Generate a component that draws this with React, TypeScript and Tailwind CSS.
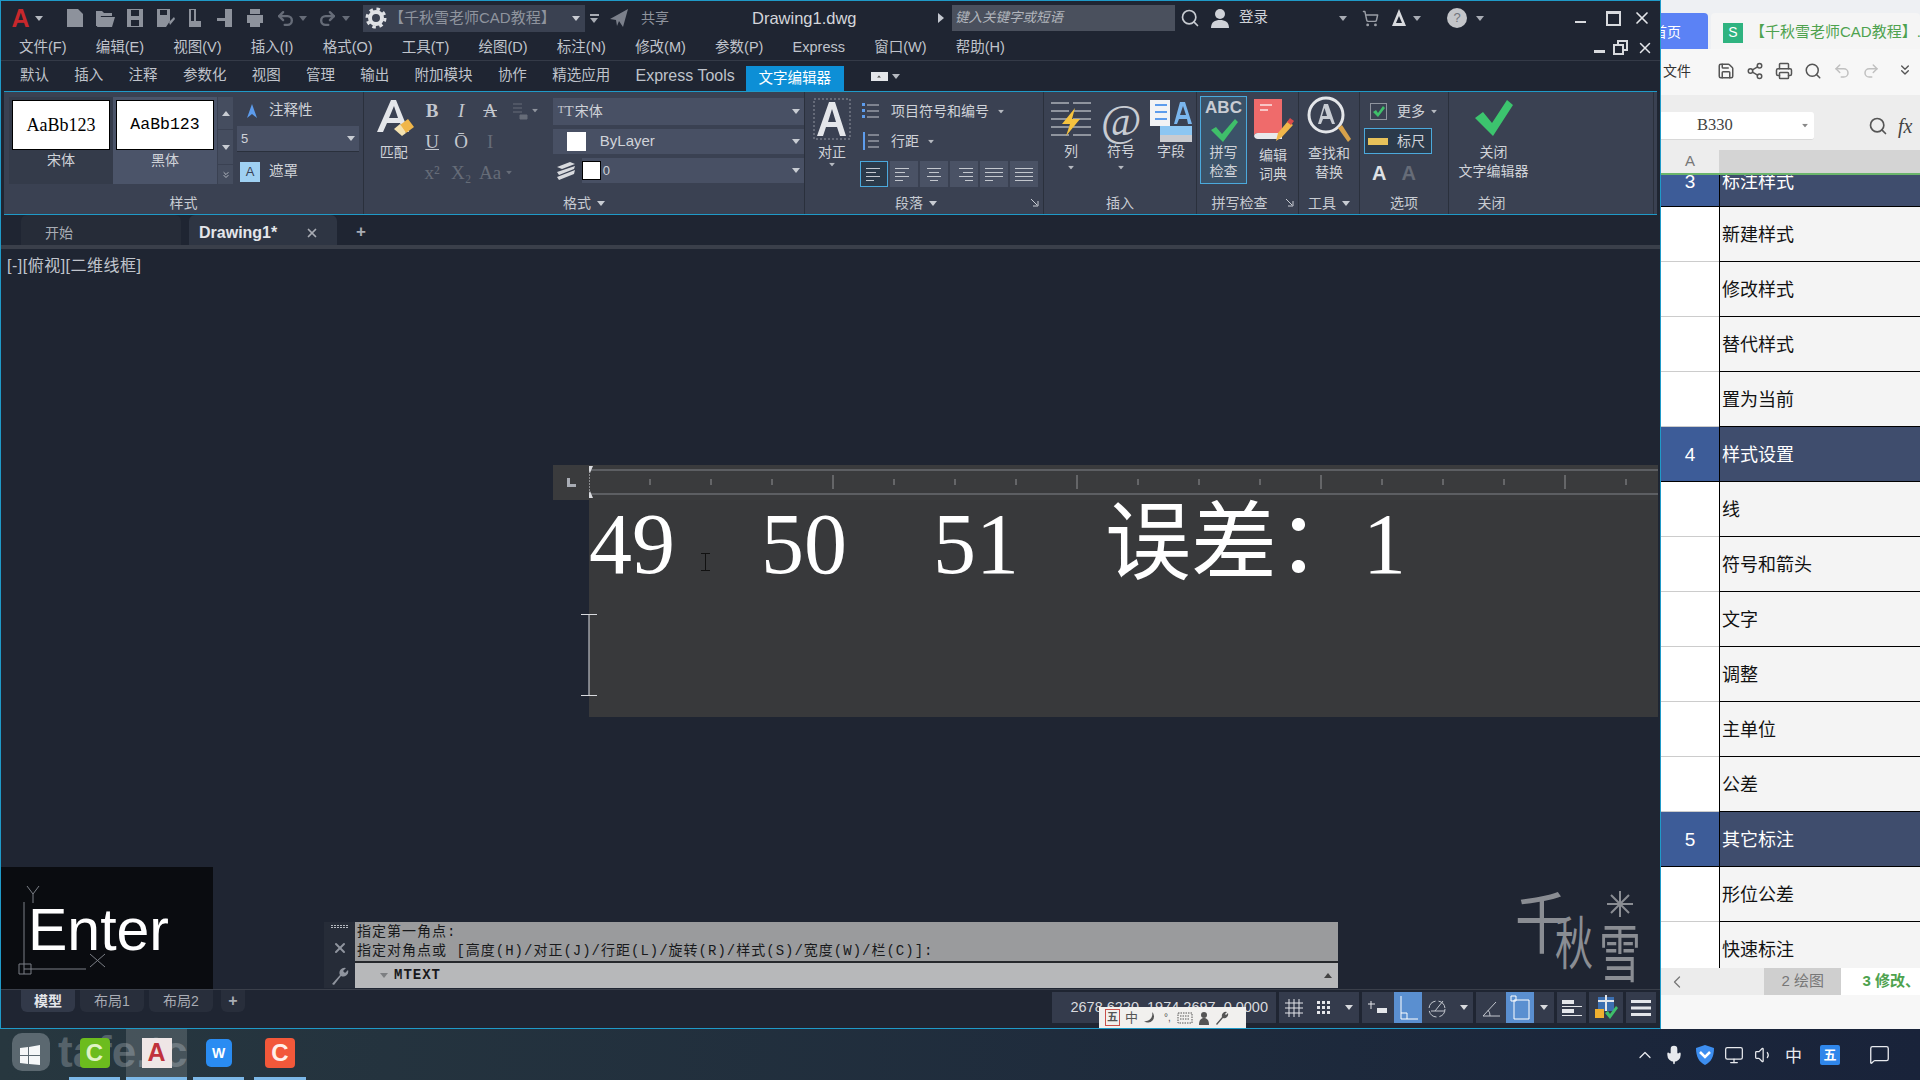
import React from 'react';
import { ChevronLeft, ChevronUp, Mic, Monitor, MessageSquare, Printer, Redo2, Save, Search, Share2, ShoppingCart, Undo2, Volume1, X, ChevronsDown } from 'lucide-react';

const Caret = ({ className = '' }: { className?: string }) => (
  <svg width="8" height="5" viewBox="0 0 8 5" className={className}>
    <path d="M0 0h8L4 5z" fill="currentColor" />
  </svg>
);

const FileIcon = ({ kind }: { kind: number }) => (
  <svg width="22" height="22" viewBox="0 0 22 22" fill="#8d929c">
    {kind === 0 && <path d="M3 2h11l5 5v13H3z" />}
    {kind === 1 && <path d="M2 19V4h6l2 2h8v3H7l-3 10zM6 10h15l-3 10H3z" />}
    {kind === 2 && <path d="M3 2h16v18H3zM7 3v6h8V3zM7 13v6h8v-6z" fillRule="evenodd" />}
    {kind === 3 && <path d="M3 2h13v12l-4 6H3zM6 3v5h7V3zM15 15l5-5 1 2-5 6z" fillRule="evenodd" />}
    {kind === 4 && <path d="M5 2h7v12h5v6H5zM7 3v11h3V3z" fillRule="evenodd" />}
    {kind === 5 && <path d="M11 2h7v18h-7v-6H3v-3h8z" />}
    {kind === 6 && <path d="M6 2h10v5H6zM3 8h16v8h-3v4H6v-4H3z" />}
  </svg>
);

const TitleBar = () => (
  <div className="flex h-[34px] shrink-0 items-center text-[#c4c8d0]">
    <div className="ml-[9px] flex w-[21px] justify-center">
      <span className="text-[25px] leading-none font-bold text-[#c8282c]">A</span>
    </div>
    <Caret className="ml-[4px] text-[#b5b9c0]" />
    <div className="ml-[17px] flex">
      {[0, 1, 2, 3, 4, 5, 6].map((k) => (
        <div key={k} className="flex w-[30px] justify-center">
          <FileIcon kind={k} />
        </div>
      ))}
    </div>
    <Undo2 size={19} strokeWidth={3} className="ml-[6px] text-[#666c78]" />
    <Caret className="ml-[4px] text-[#666c78]" />
    <Redo2 size={19} strokeWidth={3} className="ml-[11px] text-[#666c78]" />
    <Caret className="ml-[5px] text-[#666c78]" />
    <div className="ml-[13px] flex h-[27px] w-[222px] items-center bg-[#3a4151]">
      <svg width="22" height="22" viewBox="0 0 22 22" className="ml-[2px]">
        <circle cx="11" cy="11" r="6" fill="none" stroke="#dfe1e5" strokeWidth="4" />
        <circle cx="11" cy="11" r="9" fill="none" stroke="#dfe1e5" strokeWidth="3" strokeDasharray="3.5 3.6" />
      </svg>
      <span className="ml-[2px] text-[15px] text-[#8f949e]">【千秋雪老师CAD教程】</span>
      <Caret className="ml-auto mr-[5px] text-[#c9ccd3]" />
    </div>
    <div className="ml-[5px] flex flex-col gap-[2px]">
      <div className="h-[2px] w-[9px] bg-[#a8acb4]" />
      <Caret className="text-[#a8acb4]" />
    </div>
    <svg width="20" height="20" viewBox="0 0 20 20" className="ml-[10px]">
      <path d="M1 11 19 1l-5 18-4-6-2 5-1-6z" fill="#7b808b" />
    </svg>
    <span className="ml-[12px] text-[14px] text-[#8f949e]">共享</span>
    <span className="ml-[83px] w-[186px] text-[16.5px] text-[#d4d6db]">Drawing1.dwg</span>
    <svg width="6" height="10" viewBox="0 0 6 10" className="text-[#c4c8d0]">
      <path d="M0 0l6 5-6 5z" fill="currentColor" />
    </svg>
    <div className="ml-[8px] flex h-[26px] w-[223px] items-center bg-[#4a505d] pl-[3px] text-[13.5px] italic text-[#b0b4bb]">
      键入关键字或短语
    </div>
    <Search size={20} className="ml-[5px] text-[#c8ccd2]" />
    <svg width="22" height="22" viewBox="0 0 22 22" className="ml-[9px]">
      <circle cx="11" cy="7" r="5" fill="#cfd2d8" />
      <path d="M2 21c0-6 4-8 9-8s9 2 9 8z" fill="#cfd2d8" />
    </svg>
    <span className="ml-[8px] text-[14.5px] text-[#cfd2d8]">登录</span>
    <Caret className="ml-[71px] text-[#a8acb4]" />
    <ShoppingCart size={17} className="ml-[15px] text-[#9a9ea6]" />
    <svg width="22" height="22" viewBox="0 0 22 22" className="ml-[9px]">
      <path d="M11 2 4 19h14zM11 9 8 16h6z" fill="#d8dade" fillRule="evenodd" />
    </svg>
    <Caret className="ml-[3px] text-[#a8acb4]" />
    <div className="ml-[26px] flex h-[20px] w-[20px] items-center justify-center rounded-full bg-[#c3c5c9] text-[13px] text-[#70747c]">
      ?
    </div>
    <Caret className="ml-[9px] text-[#a8acb4]" />
    <div className="ml-[91px] mt-[8px] h-[2px] w-[11px] self-center bg-[#d8dade]" />
    <div className="ml-[20px] h-[15px] w-[15px] border-[2px] border-t-[3px] border-[#d8dade]" />
    <X size={20} className="ml-[11px] text-[#e4e6ea]" />
  </div>
);

const menus = ['文件(F)', '编辑(E)', '视图(V)', '插入(I)', '格式(O)', '工具(T)', '绘图(D)', '标注(N)', '修改(M)', '参数(P)', 'Express', '窗口(W)', '帮助(H)'];

const MenuBar = () => (
  <div className="flex h-[26px] shrink-0 items-center border-b border-[#343a47] pl-[18px] text-[14.5px] text-[#c0c4cc]">
    <div className="flex gap-[29.2px]">
      {menus.map((m) => (
        <span key={m}>{m}</span>
      ))}
    </div>
    <div className="ml-auto mr-[6px] flex items-center gap-[8px]">
      <div className="mt-[8px] h-[3px] w-[11px] bg-[#d8dade]" />
      <svg width="15" height="15" viewBox="0 0 15 15" fill="none" stroke="#d8dade" strokeWidth="2">
        <path d="M5 4V1h9v9h-3M1 5h9v9H1z" />
      </svg>
      <X size={18} className="text-[#e4e6ea]" />
    </div>
  </div>
);

const tabs = ['默认', '插入', '注释', '参数化', '视图', '管理', '输出', '附加模块', '协作', '精选应用'];

const TabBar = () => (
  <div className="flex h-[30px] shrink-0 items-center pl-[19px] text-[14.5px] text-[#bfc3cb]">
    <div className="flex items-center gap-[25.3px]">
      {tabs.map((t) => (
        <span key={t}>{t}</span>
      ))}
      <span className="text-[16px]">Express Tools</span>
    </div>
    <div className="ml-[11px] flex h-[25px] w-[98px] items-center justify-center self-end bg-[#0d8fd6] text-white">文字编辑器</div>
    <div className="ml-[27px] flex h-[9px] w-[17px] items-center justify-center bg-[#e4e6ea]">
      <Caret className="scale-50 rotate-180 text-[#555]" />
    </div>
    <Caret className="ml-[4px] text-[#b5b9c0]" />
  </div>
);

const Panel = ({ w, label, mark, launcher, labelClass = '', children }: { w: string; label: string; mark?: boolean; launcher?: boolean; labelClass?: string; children: React.ReactNode }) => (
  <div className={`${w} flex shrink-0 flex-col border-r border-[#2a303c]`}>
    <div className="relative flex h-[100px] shrink-0">{children}</div>
    <div className={`relative flex h-[22px] items-center justify-center gap-[6px] text-[14px] text-[#c8ccd3] ${labelClass}`}>
      <span>{label}</span>
      {mark && <Caret className="text-[#c8ccd3]" />}
      {launcher && (
        <svg width="8" height="8" viewBox="0 0 8 8" className="absolute right-[4px] top-[7px]">
          <path d="M0 0l6 6M2 7h5V2" fill="none" stroke="#c8ccd3" />
        </svg>
      )}
    </div>
  </div>
);

const BigLabel = ({ children }: { children: React.ReactNode }) => (
  <div className="text-center text-[14px] leading-[19px] text-[#d0d3d9]">{children}</div>
);

const StyleCard = ({ name, active, mono }: { name: string; active?: boolean; mono?: boolean }) => (
  <div className={`flex h-full w-[104px] flex-col items-center pt-[3px] ${active ? 'bg-[#4b5469]' : 'bg-[#343b4a]'}`}>
    <div className={`flex h-[50px] w-[98px] items-center justify-center border border-black bg-white text-black ${mono ? "font-['Liberation_Mono',monospace] text-[16.5px]" : "font-['Liberation_Serif',serif] text-[18px]"}`}>
      AaBb123
    </div>
    <span className="text-[14px] leading-[20px] text-[#d0d3d9]">{name}</span>
  </div>
);

const StylePanel = () => (
  <Panel w="w-[360px]" label="样式">
    <div className="mb-[8px] ml-[5px] mt-[5px] flex">
      <StyleCard name="宋体" />
      <StyleCard name="黑体" active mono />
      <div className="ml-[1px] flex w-[15px] flex-col gap-[1px] text-[#c8ccd3]">
        <div className="flex h-[32px] items-center justify-center bg-[#454d5f]">
          <Caret className="rotate-180" />
        </div>
        <div className="flex h-[34px] items-center justify-center bg-[#454d5f]">
          <Caret />
        </div>
        <div className="flex flex-1 items-center justify-center bg-[#454d5f]">
          <ChevronsDown size={10} />
        </div>
      </div>
    </div>
    <div className="ml-[4px] flex w-[122px] flex-col text-[14.5px] text-[#d0d3d9]">
      <div className="mt-[6px] flex h-[26px] items-center pl-[7px]">
        <svg width="16" height="16" viewBox="0 0 16 16">
          <path d="M8 1 3 15l5-4 5 4z" fill="#5d9cec" />
        </svg>
        <span className="ml-[9px]">注释性</span>
      </div>
      <div className="mt-[2px] flex h-[26px] items-center justify-between border-b border-[#2a303c] bg-[#485064] px-[4px] text-[13px]">
        5
        <Caret className="text-[#c8ccd3]" />
      </div>
      <div className="mt-[8px] flex h-[24px] items-center pl-[3px]">
        <div className="flex h-[20px] w-[20px] items-center justify-center bg-[#9fd0f2] text-[13px] text-[#394255]">A</div>
        <span className="ml-[9px]">遮罩</span>
      </div>
    </div>
  </Panel>
);

const Fmt = ({ c, cls = '' }: { c: string; cls?: string }) => (
  <span className={`flex w-[29px] justify-center font-['Liberation_Serif',serif] text-[19px] leading-none ${cls}`}>{c}</span>
);

const FormatPanel = () => (
  <Panel w="w-[441px]" label="格式" mark>
    <div className="ml-[5px] flex w-[50px] flex-col items-center pt-[7px]">
      <svg width="44" height="44" viewBox="0 0 44 44">
        <path d="M19 1h5l13 32h-6l-3-9H15l-4 9H5zM17 19h9l-4-12z" fill="#e4e6ea" fillRule="evenodd" />
        <path d="m28 26 8-6 6 8-8 6z" fill="#f0b64a" />
        <path d="m22 30 6-5 6 9-4 3z" fill="#f4e2b0" />
      </svg>
      <span className="mt-[-1px] text-[14px] leading-[20px] text-[#d0d3d9]">匹配</span>
    </div>
    <div className="-ml-[1px] flex w-[126px] flex-col pt-[3px] text-[#c3c7ce]">
      <div className="flex h-[31px] items-center">
        <Fmt c="B" cls="font-bold" />
        <Fmt c="I" cls="italic" />
        <Fmt c="A" cls="line-through" />
        <svg width="16" height="20" viewBox="0 0 16 20" className="ml-[7px] text-[#666c78]">
          <path d="M1 3h9M1 7h9M1 11h9M8 14h7v4H8z" stroke="currentColor" fill="currentColor" />
        </svg>
        <Caret className="ml-[3px] scale-75 text-[#8f949e]" />
      </div>
      <div className="flex h-[31px] items-center">
        <Fmt c="U" cls="underline" />
        <Fmt c="Ō" />
        <Fmt c="I" cls="text-[#666c78]" />
      </div>
      <div className="flex h-[31px] items-center text-[#666c78]">
        <Fmt c="x²" cls="text-[14px]" />
        <Fmt c="X₂" cls="text-[14px]" />
        <Fmt c="Aa" cls="text-[14px]" />
        <Caret className="scale-75" />
      </div>
    </div>
    <div className="ml-[10px] flex w-[253px] flex-col gap-[4px] pt-[6px] text-[14px] text-[#d0d3d9]">
      <div className="flex h-[27px] items-center bg-[#485064] pl-[5px]">
        <span className="mb-[4px] font-['Liberation_Serif',serif] text-[11px] text-[#c3c7ce]">T</span>
        <span className="mr-[1px] font-['Liberation_Serif',serif] text-[15px] text-[#c3c7ce]">T</span>
        <span>宋体</span>
        <Caret className="ml-auto mr-[4px] text-[#c8ccd3]" />
      </div>
      <div className="flex h-[25px] items-center bg-[#485064] pl-[14px]">
        <div className="h-[19px] w-[19px] bg-white" />
        <span className="ml-[14px] font-['Liberation_Sans',sans-serif] text-[15px]">ByLayer</span>
        <Caret className="ml-auto mr-[4px] text-[#c8ccd3]" />
      </div>
      <div className="flex h-[25px] items-center">
        <svg width="22" height="20" viewBox="0 0 22 20" className="ml-[2px]">
          <path d="M2 6 15 1l5 2-13 5zM2 11 20 5l-1 3L4 14zM2 16 20 9l-1 4L4 19z" fill="#d8dade" />
        </svg>
        <div className="ml-[5px] flex h-[25px] flex-1 items-center bg-[#485064]">
          <div className="h-[19px] w-[19px] border border-black bg-white" />
          <span className="ml-[2px] text-[13px]">0</span>
          <Caret className="ml-auto mr-[4px] text-[#c8ccd3]" />
        </div>
      </div>
    </div>
  </Panel>
);

const AlignBtn = ({ active, rows }: { active?: boolean; rows: string[] }) => (
  <div className={`flex h-[26px] w-[28px] flex-col justify-center gap-[3px] px-[5px] ${active ? 'border border-[#4ba9dc] bg-[#2b3a4a]' : 'bg-[#4a5265]'}`}>
    {rows.map((r, i) => (
      <div key={i} className={`h-[1px] bg-[#c3c7ce] ${r}`} />
    ))}
  </div>
);

const ParagraphPanel = () => (
  <Panel w="w-[239px]" label="段落" mark launcher labelClass="pr-[16px]">
    <div className="ml-[8px] flex w-[38px] flex-col items-center pt-[6px]">
      <svg width="38" height="44" viewBox="0 0 38 44">
        <path d="M1 1h36v40H1z" fill="none" stroke="#8f949e" strokeDasharray="2 2" />
        <path d="M16 4h6l11 34h-6l-3-9H13l-3 9H4zM15 24h8l-4-13z" fill="#e4e6ea" fillRule="evenodd" />
      </svg>
      <span className="text-[14px] leading-[20px] text-[#d0d3d9]">对正</span>
      <Caret className="scale-75 text-[#b5b9c0]" />
    </div>
    <div className="ml-[9px] flex flex-col pt-[4px] text-[14px] text-[#d0d3d9]">
      <div className="flex h-[30px] items-center">
        <svg width="20" height="20" viewBox="0 0 20 20" stroke="#c3c7ce">
          <path d="M7 4h12M7 10h12M7 16h12" />
          <path d="M2 2h3v3H2zM2 8h3v3H2zM2 14h3v3H2z" fill="#5d9cec" stroke="none" />
        </svg>
        <span className="ml-[11px]">项目符号和编号</span>
        <Caret className="ml-[8px] scale-75 text-[#b5b9c0]" />
      </div>
      <div className="flex h-[30px] items-center">
        <svg width="20" height="20" viewBox="0 0 20 20" stroke="#c3c7ce">
          <path d="M8 4h11M8 10h11M8 16h11" />
          <path d="M4 1v18" stroke="#5d9cec" strokeWidth="2" />
        </svg>
        <span className="ml-[11px]">行距</span>
        <Caret className="ml-[8px] scale-75 text-[#b5b9c0]" />
      </div>
      <div className="mt-[5px] flex gap-[2px]">
        <AlignBtn active rows={['w-[14px]', 'w-[10px]', 'w-[14px]', 'w-[8px]']} />
        <AlignBtn rows={['w-[14px]', 'w-[10px]', 'w-[14px]', 'w-[8px]']} />
        <AlignBtn rows={['w-[14px] mx-auto', 'w-[10px] mx-auto', 'w-[14px] mx-auto', 'w-[8px] mx-auto']} />
        <AlignBtn rows={['w-[14px] ml-auto', 'w-[10px] ml-auto', 'w-[14px] ml-auto', 'w-[8px] ml-auto']} />
        <AlignBtn rows={['w-full', 'w-full', 'w-full', 'w-[8px]']} />
        <AlignBtn rows={['w-full bg-[#5d9cec]', 'w-full', 'w-full', 'w-full']} />
      </div>
    </div>
  </Panel>
);

const InsertPanel = () => (
  <Panel w="w-[153px]" label="插入">
    <div className="ml-[2px] flex w-[50px] flex-col items-center pt-[8px]">
      <svg width="42" height="42" viewBox="0 0 42 42" stroke="#8f949e" strokeWidth="2">
        <path d="M1 3h18M23 3h18M1 11h18M23 11h18M1 19h18M23 19h18M1 27h18M23 27h18M1 35h18M23 35h18" />
        <path d="M25 8 12 24h8l-4 12 14-17h-8z" fill="#f5c23e" stroke="none" />
      </svg>
      <BigLabel>列</BigLabel>
      <Caret className="mt-[4px] scale-75 text-[#b5b9c0]" />
    </div>
    <div className="flex w-[50px] flex-col items-center pt-[8px]">
      <div className="flex h-[42px] items-center justify-center font-['Liberation_Serif',serif] text-[44px] leading-none italic text-[#c8ccd3]">@</div>
      <BigLabel>符号</BigLabel>
      <Caret className="mt-[4px] scale-75 text-[#b5b9c0]" />
    </div>
    <div className="flex w-[50px] flex-col items-center pt-[8px]">
      <svg width="42" height="42" viewBox="0 0 42 42">
        <rect x="0" y="0" width="20" height="26" fill="#f2f3f5" />
        <path d="M5 5h12M5 12h12M5 19h12" stroke="#5d9cec" strokeWidth="2" />
        <path d="M30 2h5l7 22h-4l-1-5h-8l-2 5h-3zM30 15h6l-3-9z" fill="#7ab6ee" fillRule="evenodd" />
        <rect x="10" y="26" width="32" height="9" fill="#8cc6f2" />
        <rect x="10" y="35" width="32" height="7" fill="#c9cbd0" />
      </svg>
      <BigLabel>字段</BigLabel>
    </div>
  </Panel>
);

const SpellPanel = () => (
  <Panel w="w-[102px]" label="拼写检查" launcher labelClass="pr-[16px]">
    <div className="ml-[3px] mt-[4px] flex h-[88px] w-[47px] flex-col items-center border border-[#4ba9dc] bg-[#3b5268] pt-[1px]">
      <span className="font-['Liberation_Sans',sans-serif] text-[17px] leading-[19px] font-bold text-[#c9ccd3]">ABC</span>
      <svg width="30" height="26" viewBox="0 0 30 24">
        <path d="m2 12 5-3 6 7L26 1l3 3-15 20z" fill="#3fbf6a" />
      </svg>
      <BigLabel>拼写<br />检查</BigLabel>
    </div>
    <div className="ml-[2px] flex w-[48px] flex-col items-center pt-[5px]">
      <svg width="42" height="48" viewBox="0 0 42 48">
        <path d="M2 2h28v34H6a4 4 0 0 0-4 3z" fill="#ef6b6b" />
        <path d="M2 39a4 4 0 0 1 4-3h24v6H6a4 4 0 0 1-4-3z" fill="#e8e9ec" />
        <path d="M8 8h12M8 13h8" stroke="#f9c5c5" strokeWidth="2" />
        <path d="m24 44 2-8 10-12 5 4-11 12z" fill="#f0b64a" />
        <path d="m35 25 3-4 4 3-3 4z" fill="#d84b4b" />
      </svg>
      <div className="mt-[1px]">
        <BigLabel>编辑<br />词典</BigLabel>
      </div>
    </div>
  </Panel>
);

const ToolPanel = () => (
  <Panel w="w-[61px]" label="工具" mark>
    <div className="flex w-full flex-col items-center pt-[4px]">
      <svg width="44" height="48" viewBox="0 0 44 48">
        <circle cx="19" cy="19" r="17" fill="none" stroke="#e4e6ea" strokeWidth="3" />
        <path d="M17 8h4l7 20h-3l-2-5h-7l-2 5h-3zM15 20h5l-2.500-8z" fill="#c8ccd3" fillRule="evenodd" />
        <path d="m31 32 4-3 9 14-3 3z" fill="#d8a24a" />
      </svg>
      <BigLabel>查找和<br />替换</BigLabel>
    </div>
  </Panel>
);

const OptionPanel = () => (
  <Panel w="w-[89px]" label="选项">
    <div className="flex flex-col pl-[4px] pt-[6px] text-[14px] text-[#d0d3d9]">
      <div className="flex h-[26px] items-center">
        <div className="ml-[6px] flex h-[17px] w-[17px] items-center justify-center border border-[#8f949e]">
          <svg width="13" height="13" viewBox="0 0 13 13">
            <path d="m1 7 3-2 2 3 5-7 2 2-7 9z" fill="#3fbf6a" />
          </svg>
        </div>
        <span className="ml-[10px]">更多</span>
        <Caret className="ml-[5px] scale-75 text-[#b5b9c0]" />
      </div>
      <div className="mt-[4px] flex h-[26px] w-[68px] items-center border border-[#4ba9dc] bg-[#2b3a4a] pl-[3px]">
        <div className="h-[7px] w-[20px] bg-[#e6c25a]" />
        <span className="ml-[9px]">标尺</span>
      </div>
      <div className="mt-[7px] flex h-[24px] items-center gap-[15px] pl-[8px] font-['Liberation_Sans',sans-serif] text-[20px] font-bold">
        <span className="text-[#dfe1e5]">A</span>
        <span className="text-[#666c78]">A</span>
      </div>
    </div>
  </Panel>
);

const ClosePanel = () => (
  <Panel w="w-[205px]" label="关闭" labelClass="w-[85px]">
    <div className="ml-[2px] flex w-[85px] flex-col items-center pt-[7px]">
      <svg width="40" height="38" viewBox="0 0 40 38">
        <path d="m1 19 8-6 9 11L33 1l6 5-20 31z" fill="#3cc46e" />
      </svg>
      <div className="mt-[6px]">
        <BigLabel>关闭<br />文字编辑器</BigLabel>
      </div>
    </div>
  </Panel>
);

const Ribbon = () => (
  <div className="mx-[3px] flex h-[124px] shrink-0 border-y border-[#1f9ac8] bg-[#3a4152]">
    <StylePanel />
    <FormatPanel />
    <ParagraphPanel />
    <InsertPanel />
    <SpellPanel />
    <ToolPanel />
    <OptionPanel />
    <ClosePanel />
  </div>
);

const DocTabs = () => (
  <div className="flex h-[34px] shrink-0 items-end border-b-[4px] border-[#3a3f4a] pl-[20px] text-[14px]">
    <div className="flex h-[30px] w-[160px] items-center rounded-t-[6px] bg-[#262c38] pl-[24px] pt-[6px] text-[#a8acb4]">开始</div>
    <div className="ml-[8px] flex h-[30px] w-[148px] items-center rounded-t-[6px] bg-[#2e3543] pl-[10px] pt-[6px] font-['Liberation_Sans',sans-serif] text-[16px] font-bold text-[#e4e6ea]">
      Drawing1*
      <X size={14} strokeWidth={3} className="ml-[28px] text-[#a8acb4]" />
    </div>
    <span className="mb-[1px] ml-[19px] text-[17px] font-bold text-[#a8acb4]">+</span>
  </div>
);

const rulerTicks = Array.from({ length: 18 }, (_, i) => i + 1);

const TextEditor = () => (
  <div className="absolute left-[552px] top-[216px] flex w-[1105px] flex-col">
    <div className="flex h-[35px] items-center bg-[#3a3b3d]">
      <div className="flex w-[36px] justify-center text-[#a8acb4]">
        <svg width="10" height="10" viewBox="0 0 10 10">
          <path d="M1 0h3v6h6v3H1z" fill="currentColor" />
        </svg>
      </div>
      <svg width="1069" height="35" viewBox="0 0 1069 35">
        <path d="M0 5h1069M0 29h1069" stroke="#6a6c70" strokeWidth="1.5" />
        <path d="M0 6v24" stroke="#d8dade" strokeDasharray="2 1" />
        <path d="M-3 1h6l-3 7zM-3 33h6l-3-7z" fill="#d8dade" transform="translate(1 0)" />
        {rulerTicks.map((i) => (
          <path key={i} d={i % 4 === 0 ? `M${i * 61} 10v14` : `M${i * 61} 14v6`} stroke="#8f9194" />
        ))}
      </svg>
    </div>
    <div className="ml-[36px] h-[217px] bg-[#38393b]">
      <div className="relative h-full whitespace-pre font-['Liberation_Serif','Noto_Sans_CJK_SC',serif] text-[86px] leading-[88px] text-white">
        {'49    50    51    误差：1'}
        <svg width="16" height="82" viewBox="0 0 16 82" className="absolute left-[-8px] top-[114px]">
          <path d="M8 0v82M0 .5h16M0 81.500h16" stroke="#d8dade" fill="none" />
        </svg>
        <svg width="9" height="18" viewBox="0 0 9 18" className="absolute left-[112px] top-[53px]">
          <path d="M0 .5h9M0 17.500h9M4.500 0v18" stroke="#111" fill="none" />
        </svg>
      </div>
    </div>
  </div>
);

const CommandLine = () => (
  <div className="absolute left-[323px] top-[673px] flex h-[66px] w-[1014px] font-['Liberation_Mono','Noto_Sans_CJK_SC',monospace] text-[14px] tracking-[1px]">
    <div className="flex w-[31px] flex-col items-center justify-between bg-[#262c38] py-[3px] text-[#8f949e]">
      <div className="grid grid-cols-6 gap-[1px]">
        {Array.from({ length: 12 }, (_, i) => (
          <div key={i} className="h-[1px] w-[2px] bg-[#b5b9c0]" />
        ))}
      </div>
      <X size={16} strokeWidth={3} />
      <svg width="18" height="18" viewBox="0 0 18 18">
        <path d="m1 17 8-9a5 5 0 0 1 6-7l-3 3 2 2 3-3a5 5 0 0 1-7 6l-7 9z" fill="#8f949e" />
      </svg>
    </div>
    <div className="flex flex-1 flex-col">
      <div className="flex h-[41px] flex-col justify-center border-b-[2px] border-[#26282c] bg-[#9a9b9d] pl-[2px] leading-[19px] text-[#18191b]">
        <div>指定第一角点:</div>
        <div className="whitespace-pre">指定对角点或 [高度(H)/对正(J)/行距(L)/旋转(R)/样式(S)/宽度(W)/栏(C)]:</div>
      </div>
      <div className="flex flex-1 items-center bg-[#b7b8ba] pl-[25px] font-bold text-[#18191b]">
        <Caret className="text-[#7d7f82]" />
        <span className="ml-[6px]">MTEXT</span>
        <Caret className="ml-auto mr-[6px] rotate-180 text-[#444]" />
      </div>
    </div>
  </div>
);

const EnterOverlay = () => (
  <div className="absolute bottom-0 left-0 h-[122px] w-[212px] bg-[#0a0c10]">
    <svg width="212" height="122" viewBox="0 0 212 122" className="absolute left-0 top-0" stroke="#7b7f86" fill="none">
      <path d="M26 19l6 8 6-8M32 27v9M23 35v72M23 102h62M18 97h12v10H18zM89 87l15 13M104 87 89 100" />
    </svg>
    <span className="absolute left-[27px] top-[28px] font-['Liberation_Sans',sans-serif] text-[59px] leading-[70px] text-white">Enter</span>
  </div>
);

const Watermark = () => (
  <div className="absolute left-[1514px] top-[634px] h-[96px] w-[134px] font-['Noto_Sans_CJK_SC',sans-serif] text-[#8a8d93]">
    <span className="absolute left-0 top-[2px] origin-top scale-y-125 text-[54px] leading-none">千</span>
    <span className="absolute left-[40px] top-[28px] origin-top scale-y-150 text-[38px] leading-none">秋</span>
    <span className="absolute left-[84px] top-[34px] origin-top scale-y-150 text-[42px] leading-none">雪</span>
    <svg width="26" height="26" viewBox="0 0 26 26" stroke="#8a8d93" strokeWidth="2" className="absolute left-[92px] top-[8px]">
      <path d="M13 0v26M0 13h26M4 4l18 18M22 4 4 22" />
    </svg>
  </div>
);

const Viewport = () => (
  <div className="relative flex-1">
    <div className="pl-[6px] pt-[7px] text-[16px] leading-[20px] tracking-[0.5px] text-[#c0c4cc]">[-][俯视][二维线框]</div>
    <TextEditor />
    <CommandLine />
    <EnterOverlay />
    <Watermark />
  </div>
);

const StatusIcon = ({ w, active, children }: { w: string; active?: boolean; children: React.ReactNode }) => (
  <div className={`${w} flex h-[31px] items-center justify-center ${active ? 'bg-[#5a8fd0]' : ''}`}>{children}</div>
);

const StatusBar = () => (
  <div className="relative flex h-[39px] shrink-0 border-t border-[#3a3f4a] text-[14px]">
    <div className="ml-[20px] flex h-[22px] gap-[5px] text-[#a8acb4]">
      <div className="flex w-[54px] items-center justify-center rounded-b-[6px] bg-[#323949] font-bold text-[#e4e6ea]">模型</div>
      <div className="flex w-[64px] items-center justify-center rounded-b-[6px] bg-[#282e3b]">布局1</div>
      <div className="flex w-[64px] items-center justify-center rounded-b-[6px] bg-[#282e3b]">布局2</div>
      <div className="ml-[3px] flex w-[24px] items-center justify-center rounded-b-[6px] bg-[#282e3b] text-[16px] font-bold">+</div>
    </div>
    <div className="ml-auto mr-[4px] mt-[2px] flex h-[31px] gap-[3px] text-[#d8dade]">
      <div className="flex w-[224px] items-center justify-end bg-[#343b4c] pr-[8px] text-[14.5px]">2678.6220, 1974.2697, 0.0000</div>
      <div className="flex w-[80px] items-center bg-[#343b4c]">
        <StatusIcon w="w-[30px]">
          <svg width="20" height="20" viewBox="0 0 20 20" stroke="#e4e6ea"><path d="M1 5h18M1 10h18M1 15h18M5 1v18M10 1v18M15 1v18" /></svg>
        </StatusIcon>
        <StatusIcon w="w-[30px]">
          <svg width="16" height="16" viewBox="0 0 16 16" fill="#e4e6ea"><path d="M1 1h3v3H1zM6 1h3v3H6zM11 1h3v3h-3zM1 6h3v3H1zM6 6h3v3H6zM11 6h3v3h-3zM1 11h3v3H1zM6 11h3v3H6zM11 11h3v3h-3z" /></svg>
        </StatusIcon>
        <StatusIcon w="w-[20px]"><Caret /></StatusIcon>
      </div>
      <div className="flex w-[111px] items-center bg-[#343b4c]">
        <StatusIcon w="w-[32px]">
          <svg width="20" height="16" viewBox="0 0 20 16" fill="#e4e6ea"><path d="M3 1v8M0 4h7" stroke="#e4e6ea" /><path d="M9 8h10v5H9z" /></svg>
        </StatusIcon>
        <StatusIcon w="w-[28px]" active>
          <svg width="22" height="26" viewBox="0 0 22 26" stroke="#fff" fill="none"><path d="M4 1v23h17M4 18h6v6" /></svg>
        </StatusIcon>
        <StatusIcon w="w-[32px]">
          <svg width="22" height="22" viewBox="0 0 22 22" stroke="#c3c7ce" fill="none"><circle cx="10" cy="12" r="8" strokeDasharray="10 3" /><path d="m8 14 8-10M4 14h14" /></svg>
        </StatusIcon>
        <StatusIcon w="w-[19px]"><Caret /></StatusIcon>
      </div>
      <div className="flex w-[78px] items-center bg-[#343b4c]">
        <StatusIcon w="w-[30px]">
          <svg width="20" height="20" viewBox="0 0 20 20" stroke="#c3c7ce" fill="none"><path d="M2 18h17M2 18 15 4M9 18a8 8 0 0 0-2-6" /></svg>
        </StatusIcon>
        <StatusIcon w="w-[28px]" active>
          <svg width="22" height="26" viewBox="0 0 22 26" stroke="#fff" fill="none"><path d="M5 5h15v19H5zM2 1h5v5H2z" /></svg>
        </StatusIcon>
        <StatusIcon w="w-[20px]"><Caret /></StatusIcon>
      </div>
      <div className="flex w-[29px] items-center justify-center bg-[#343b4c]">
        <svg width="20" height="18" viewBox="0 0 20 18" fill="#e4e6ea"><path d="M0 1h12v4H0zM0 7h20v1H0zM0 10h12v4H0zM0 16h20v1H0z" /></svg>
      </div>
      <div className="flex w-[34px] items-center justify-center bg-[#343b4c]">
        <svg width="24" height="26" viewBox="0 0 24 26">
          <path d="M4 2h16v14H4z" fill="#3c6fb0" />
          <path d="M12 0v16M4 6h16" stroke="#e4e6ea" strokeWidth="2" />
          <path d="M1 14h9v9H1z" fill="#f0b030" />
          <path d="m11 18 3-2 2 3 6-8 2 2-8 11z" fill="#3fbf6a" />
        </svg>
      </div>
      <div className="flex w-[30px] items-center justify-center bg-[#343b4c]">
        <svg width="20" height="18" viewBox="0 0 20 18" fill="#e4e6ea"><path d="M0 1h20v3H0zM0 7.500h20v3H0zM0 14h20v3H0z" /></svg>
      </div>
    </div>
    <div className="absolute bottom-0 left-[1098px] flex h-[21px] w-[147px] items-center gap-[3px] bg-[#f1f0ee] px-[6px] text-[13px] text-[#555]">
      <span className="flex h-[17px] w-[15px] items-center justify-center border border-[#c9504a] text-[11px] font-bold">五</span>
      <span className="ml-[2px]">中</span>
      <svg width="14" height="14" viewBox="0 0 14 14" className="ml-[2px]"><path d="M9 1a6 6 0 1 1-8 9 7 7 0 0 0 8-9z" fill="#555" /></svg>
      <span className="ml-[4px] text-[10px]">°,</span>
      <svg width="16" height="12" viewBox="0 0 16 12" className="ml-[3px]" fill="none" stroke="#555"><path d="M1 1h14v10H1zM3 4h10M3 7h10" strokeDasharray="1.500 1" /></svg>
      <svg width="12" height="14" viewBox="0 0 12 14" className="ml-[2px]" fill="#555"><circle cx="6" cy="4" r="3" /><path d="M1 14c0-5 2-7 5-7s5 2 5 7z" /></svg>
      <svg width="14" height="14" viewBox="0 0 14 14" className="ml-[2px]" fill="#555"><path d="m1 13 6-7a4 4 0 0 1 5-5l-2 2 1 1 2-2a4 4 0 0 1-5 5l-6 7z" /></svg>
    </div>
  </div>
);

const CadWindow = () => (
  <div className="flex w-[1661px] shrink-0 flex-col border border-[#1f9ac8] bg-[#1f2532]">
    <TitleBar />
    <MenuBar />
    <TabBar />
    <Ribbon />
    <DocTabs />
    <Viewport />
    <StatusBar />
  </div>
);

type Row = { no?: string; name: string; head?: boolean };

const rows: Row[] = [
  { name: '新建样式' },
  { name: '修改样式' },
  { name: '替代样式' },
  { name: '置为当前' },
  { no: '4', name: '样式设置', head: true },
  { name: '线' },
  { name: '符号和箭头' },
  { name: '文字' },
  { name: '调整' },
  { name: '主单位' },
  { name: '公差' },
  { no: '5', name: '其它标注', head: true },
  { name: '形位公差' },
  { name: '快速标注' },
];

const SheetRow = ({ row }: { row: Row }) => (
  <div className="flex h-[55px] shrink-0">
    <div className={`flex w-[58px] items-center justify-center border-b pt-[2px] text-[19px] ${row.head ? 'border-black bg-[#3d5c98] text-white' : 'border-[#cccccc] bg-white'}`}>
      {row.no}
    </div>
    <div className={`flex flex-1 items-center border-b border-l border-black pl-[2px] pt-[3px] text-[18px] ${row.head ? 'bg-[#3f4d6d] text-white' : 'bg-[#f4f4f4] text-[#111]'}`}>
      {row.name}
    </div>
  </div>
);

const WpsPanel = () => (
  <div className="flex min-w-0 flex-1 flex-col bg-white">
    <div className="flex h-[49px] shrink-0 items-end bg-[#eef0f3] text-[15px]">
      <div className="flex h-[36px] w-[47px] items-center overflow-hidden whitespace-nowrap rounded-tr-[4px] bg-[#5b82f5] pt-[3px] text-[14px] text-white">
        <span className="-ml-[8px]">首页</span>
      </div>
      <div className="ml-[3px] flex h-[36px] flex-1 items-center overflow-hidden whitespace-nowrap rounded-t-[4px] bg-[#f5f5f5] pl-[12px] pt-[3px] text-[#4ea24e]">
        <div className="flex h-[20px] w-[20px] shrink-0 items-center justify-center bg-[#2fb380] text-[14px] text-white">S</div>
        <span className="ml-[7px]">【千秋雪老师CAD教程】..</span>
      </div>
    </div>
    <div className="flex h-[46px] shrink-0 items-center bg-[#f7f7f7] pb-[2px] text-[#555]">
      <span className="ml-[2px] w-[54px] text-[14px] text-[#333]">文件</span>
      <div className="flex gap-[11px]">
        <Save size={18} />
        <Share2 size={18} />
        <Printer size={18} />
        <Search size={18} />
        <Undo2 size={18} className="text-[#c0c0c0]" />
        <Redo2 size={18} className="text-[#c0c0c0]" />
        <ChevronsDown size={16} className="ml-[6px]" />
      </div>
    </div>
    <div className="flex h-[55px] shrink-0 items-center bg-[#ededed] pt-[6px]">
      <div className="flex h-[28px] w-[153px] items-center rounded-r-[3px] border-b border-[#d8d8d8] bg-white pl-[36px] font-['Liberation_Serif',serif] text-[16.5px] text-[#444]">
        B330
        <Caret className="ml-auto mr-[5px] scale-75 text-[#888]" />
      </div>
      <Search size={20} className="ml-[54px] text-[#555]" />
      <span className="ml-[10px] font-['Liberation_Serif',serif] text-[20px] italic text-[#444]">fx</span>
    </div>
    <div className="flex h-[25px] shrink-0 border-b-[2px] border-[#6bb56b] bg-[#ededed]">
      <div className="flex w-[58px] items-center justify-center text-[15px] text-[#777]">A</div>
      <div className="flex-1 bg-[#d4d4d4]" />
    </div>
    <div className="flex h-[32px] shrink-0 overflow-hidden border-b border-black text-white">
      <div className="flex w-[58px] justify-center bg-[#3d5c98] text-[19px] leading-[14px]">3</div>
      <div className="flex-1 border-l border-black bg-[#3f4d6d] pl-[2px] text-[18px] leading-[14px]">标注样式</div>
    </div>
    <div className="h-[761px] shrink-0 overflow-hidden">
      {rows.map((r) => (
        <SheetRow key={r.name} row={r} />
      ))}
    </div>
    <div className="flex h-[27px] shrink-0 items-center bg-[#ececec] text-[15px]">
      <div className="w-[107px] pl-[6px]">
        <ChevronLeft size={20} className="text-[#777]" strokeWidth={1.5} />
      </div>
      <div className="flex h-full w-[81px] items-center justify-center bg-[#cfcfcf] text-[#777]">2 绘图</div>
      <div className="flex h-full flex-1 items-center whitespace-nowrap bg-white pl-[21px] font-bold text-[#4ea24e]">3 修改、</div>
    </div>
    <div className="flex-1 bg-[#f7f7f7]" />
  </div>
);

const TaskIcon = ({ bar, active, children }: { bar: string; active?: boolean; children: React.ReactNode }) => (
  <div className={`${bar} flex h-full shrink-0 items-center justify-center border-b-[3px] border-[#7cb8e8] ${active ? 'bg-white/15' : ''}`}>{children}</div>
);

const Taskbar = () => (
  <div className="relative flex h-[51px] shrink-0 items-center bg-gradient-to-r from-[#27373f] to-[#19233a]">
    <div className="absolute left-[12px] top-[1px] flex items-center font-['Liberation_Sans',sans-serif] text-[44px] font-bold leading-none text-[#55626a]">
      <div className="mr-[8px] h-[38px] w-[38px] rounded-[10px] bg-[#5b6870]" />
      tafe.tc
    </div>
    <svg width="20" height="20" viewBox="0 0 20 20" className="absolute left-[20px] top-[16px]" fill="#f5f7f8">
      <path d="m0 3 8-1v8H0zM9 2l11-2v10H9zM0 11h8v8l-8-1zM9 11h11v9L9 19z" />
    </svg>
    <div className="relative ml-[69px] flex h-full items-center">
      <TaskIcon bar="w-[51px]">
        <div className="flex h-[30px] w-[30px] items-center justify-center rounded-[4px] bg-[#6cbc1e] text-[24px] font-bold text-[#dff2c4]">C</div>
      </TaskIcon>
      <TaskIcon bar="ml-[6px] w-[61px]" active>
        <div className="flex h-[30px] w-[30px] items-center justify-center bg-[#efe6e6] font-['Liberation_Sans',sans-serif] text-[25px] font-bold text-[#c0323c]">A</div>
      </TaskIcon>
      <TaskIcon bar="ml-[6px] w-[51px]">
        <div className="flex h-[28px] w-[26px] items-center justify-center rounded-[5px] bg-[#2a8cf2] text-[14px] font-bold text-white">W</div>
      </TaskIcon>
      <TaskIcon bar="ml-[10px] w-[52px]">
        <div className="flex h-[30px] w-[30px] items-center justify-center rounded-[4px] bg-[#f2583a] text-[24px] font-bold text-[#fff0ea]">C</div>
      </TaskIcon>
    </div>
    <div className="relative ml-auto flex items-center text-[#e8eaee]">
      <ChevronUp size={20} strokeWidth={1.5} />
      <Mic size={20} className="ml-[9px]" fill="#e8eaee" />
      <svg width="20" height="22" viewBox="0 0 20 22" className="ml-[11px]">
        <path d="M10 1 1 4c0 9 3 14 9 17 6-3 9-8 9-17z" fill="#3d8ef0" />
        <path d="m5 8 5 5 5-5" fill="none" stroke="#fff" strokeWidth="2.500" />
      </svg>
      <Monitor size={20} strokeWidth={1.5} className="ml-[9px]" />
      <Volume1 size={20} strokeWidth={1.5} className="ml-[10px]" />
      <span className="ml-[11px] w-[20px] text-[17px] font-['Noto_Sans_CJK_SC',sans-serif]">中</span>
      <div className="ml-[15px] flex h-[20px] w-[20px] items-center justify-center rounded-[2px] bg-[#2f86ea] text-[13px] font-bold text-white">五</div>
      <MessageSquare size={21} strokeWidth={1.5} className="ml-[29px] mr-[30px]" />
    </div>
  </div>
);

const App: React.FC = () => {
  return (
    <div className="flex h-[1080px] w-[1920px] flex-col overflow-hidden font-['Liberation_Sans','Noto_Sans_CJK_SC',sans-serif]">
      <div className="flex h-[1029px] shrink-0">
        <CadWindow />
        <WpsPanel />
      </div>
      <Taskbar />
    </div>
  );
};

export default App;
